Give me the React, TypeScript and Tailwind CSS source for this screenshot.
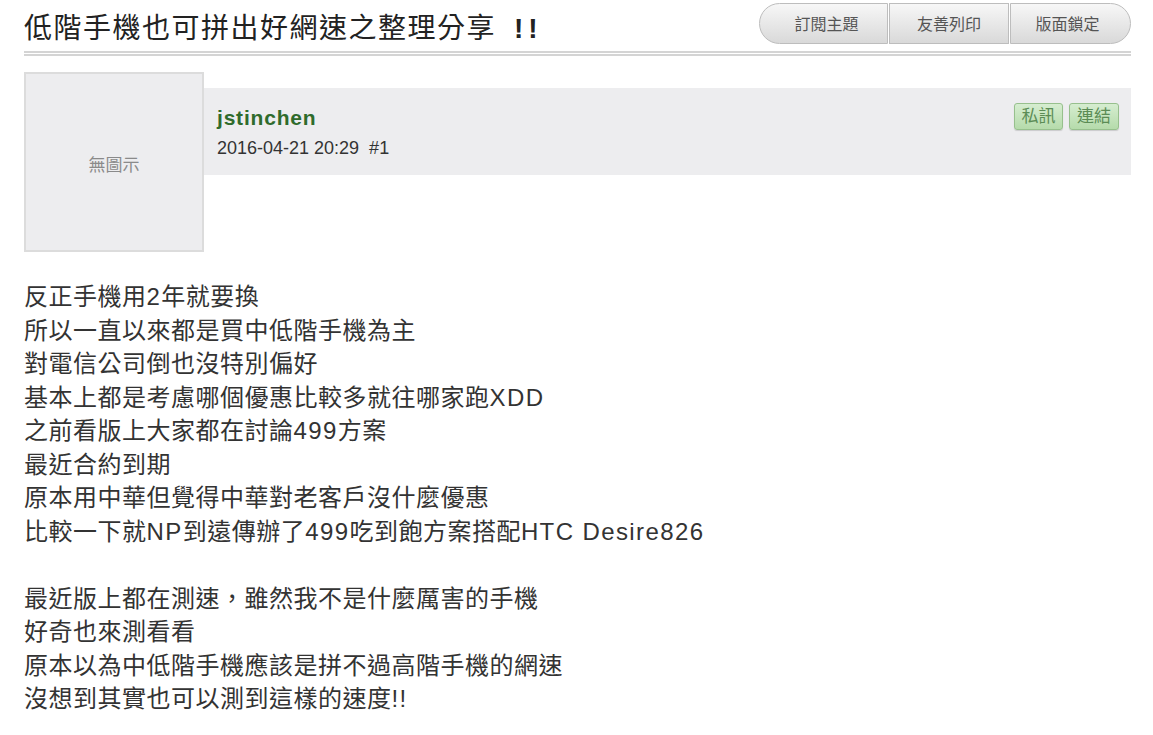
import React from 'react';

const toolButtons = ['訂閱主題', '友善列印', '版面鎖定'];

const bodyLines = [
  '反正手機用2年就要換',
  '所以一直以來都是買中低階手機為主',
  '對電信公司倒也沒特別偏好',
  '基本上都是考慮哪個優惠比較多就往哪家跑XDD',
  '之前看版上大家都在討論499方案',
  '最近合約到期',
  '原本用中華但覺得中華對老客戶沒什麼優惠',
  '比較一下就NP到遠傳辦了499吃到飽方案搭配HTC Desire826',
  '',
  '最近版上都在測速，雖然我不是什麼厲害的手機',
  '好奇也來測看看',
  '原本以為中低階手機應該是拼不過高階手機的網速',
  '沒想到其實也可以測到這樣的速度!!',
];

// latin runs render a touch wider in the original, so give them extra tracking
function Line({ text }: { text: string }) {
  const parts = text.split(/([\x20-\x7e]+)/).filter(Boolean);
  return (
    <div className="h-[33.5px] whitespace-pre">
      {parts.map((p, i) =>
        /^[\x20-\x7e]+$/.test(p) ? (
          <span key={i} className="tracking-[1.4px]">
            {p}
          </span>
        ) : (
          <span key={i}>{p}</span>
        )
      )}
    </div>
  );
}

export default function App() {
  return (
    <div className="w-[1153px] h-[735px] overflow-hidden bg-white font-['Liberation_Sans','Noto_Sans_CJK_TC',sans-serif]">
      <div className="pl-6 pr-[22px]">
        {/* Title row */}
        <div className="flex items-start justify-between pt-[3px] h-[51px]">
          <h1 className="mt-[12px] text-[28px] leading-[28px] tracking-[1.5px] text-[#222] whitespace-nowrap">
            低階手機也可拼出好網速之整理分享
            <span className="ml-[18px] tracking-[5px] font-bold">!!</span>
          </h1>
          <div className="flex gap-[1px]">
            {toolButtons.map((label, i) => (
              <button
                key={label}
                className={
                  'h-[41px] pt-[2px] border border-[#bdbdbd] bg-gradient-to-b from-[#f7f7f7] to-[#d9d9d9] text-[16px] text-[#555] ' +
                  (i === 0
                    ? 'w-[129px] rounded-l-[21px] pl-[6px]'
                    : i === 2
                    ? 'w-[121px] rounded-r-[21px] pr-[6px]'
                    : 'w-[120px]')
                }
              >
                {label}
              </button>
            ))}
          </div>
        </div>
        <div className="h-[5px] border-t-2 border-b-2 border-[#d4d4d4]" />

        {/* Post header */}
        <div className="flex mt-[16px]">
          <div className="w-[180px] h-[180px] shrink-0 border-2 border-[#dcdcdc] bg-[#ededef] flex items-center justify-center">
            <span className="text-[17px] text-[#8a8a8a] mt-[8px]">無圖示</span>
          </div>
          <div className="flex-1 mt-[16px] h-[87px] bg-[#ededef] flex justify-between pl-[13px] pr-[12px]">
            <div className="pt-[18px]">
              <div className="text-[21px] font-bold leading-[24px] tracking-[0.8px] text-[#2f6b2c]">jstinchen</div>
              <div className="mt-[8px] text-[18px] leading-[20px] text-[#333]">2016-04-21 20:29&nbsp;&nbsp;#1</div>
            </div>
            <div className="flex gap-[6px] pt-[15px]">
              <span className="h-[27px] w-[49px] rounded-[3px] border border-[#97c08d] bg-gradient-to-b from-[#d6edd0] to-[#b5dbab] text-[17px] leading-[25px] text-center text-[#5b8c55] shadow-[0_1px_1px_rgba(0,0,0,0.15)]">
                私訊
              </span>
              <span className="h-[27px] w-[50px] rounded-[3px] border border-[#97c08d] bg-gradient-to-b from-[#d6edd0] to-[#b5dbab] text-[17px] leading-[25px] text-center text-[#5b8c55] shadow-[0_1px_1px_rgba(0,0,0,0.15)]">
                連結
              </span>
            </div>
          </div>
        </div>

        {/* Body */}
        <div className="mt-[28px] text-[24px] leading-[33.5px] tracking-[0.5px] text-[#333]">
          {bodyLines.map((line, i) => (
            <Line key={i} text={line} />
          ))}
        </div>
      </div>
    </div>
  );
}
